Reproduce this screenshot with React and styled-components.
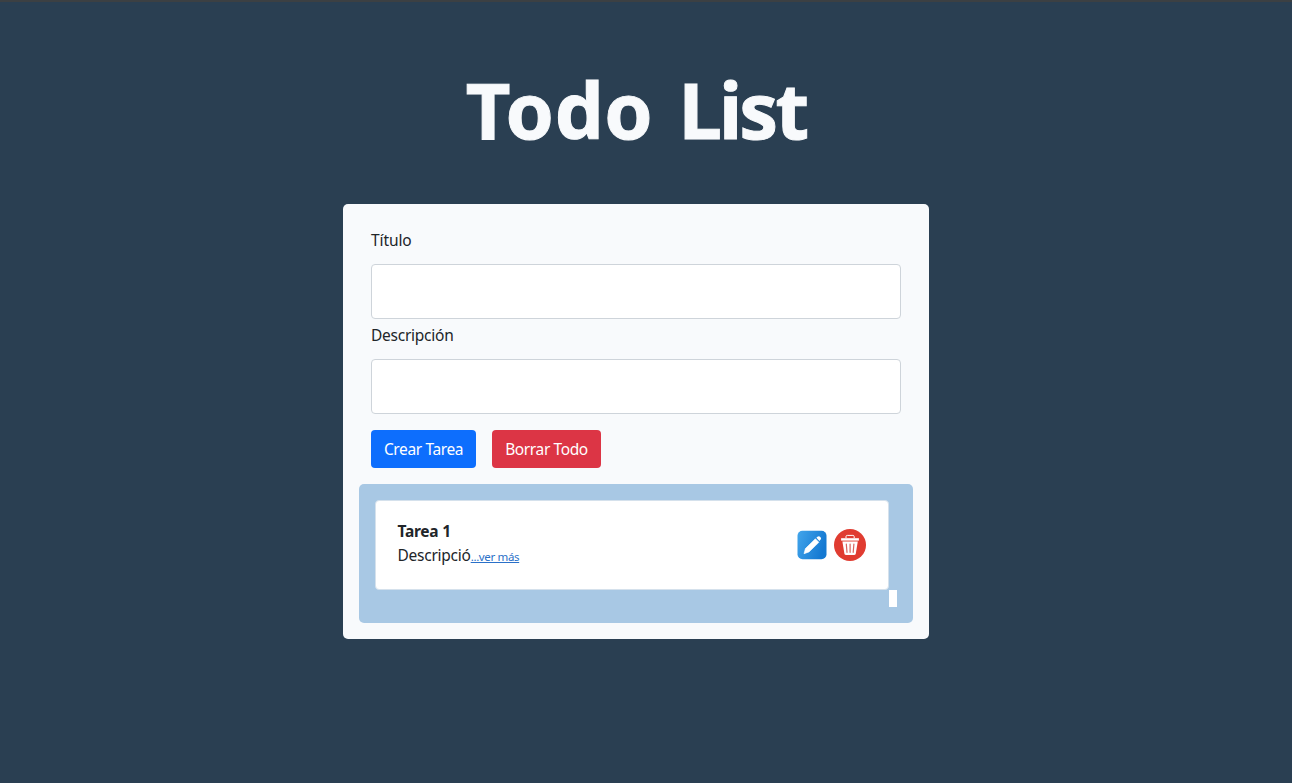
import React from "react";
import styled, { createGlobalStyle } from "styled-components";

const GlobalStyle = createGlobalStyle`
  *, *::before, *::after { box-sizing: border-box; }
  body {
    margin: 0;
    background: #2a3f52;
    color: #212529;
    font-family: "Segoe UI", "Noto Sans", "Open Sans", sans-serif;
    font-size: 15.5px;
    line-height: 24px;
  }
`;

const Page = styled.main`
  display: flex;
  flex-direction: column;
  align-items: center;
  min-height: 783px;
  padding-right: 20px;
  border-top: 2px solid #3c4043;
`;

const Title = styled.h1`
  margin: 59px 0 0;
  height: 143px;
  color: #f8fafc;
  font-size: 77.5px;
  font-weight: 700;
  line-height: 96px;
  word-spacing: 5px;
  white-space: nowrap;
  -webkit-text-stroke: 1px #f8fafc;
`;

const Word = styled.span`
  letter-spacing: ${(p) => p.$spacing};
`;

const Panel = styled.section`
  width: 586px;
  height: 435px;
  padding: 16px;
  border-radius: 5px;
  background: #f8fafc;
`;

const Form = styled.form`
  display: flex;
  flex-direction: column;
  padding: 8px 12px 16px;
`;

const Label = styled.label`
  height: 24px;
  margin-bottom: 12px;
  letter-spacing: ${(p) => p.$spacing || "0"};
`;

const Input = styled.input`
  width: 100%;
  height: 55px;
  margin-bottom: ${(p) => (p.$last ? "16px" : "4px")};
  padding: 6px 12px;
  border: 1px solid #ced4da;
  border-radius: 4px;
  background: #fff;
  font: inherit;
  outline: none;
`;

const Actions = styled.div`
  display: flex;
  gap: 16px;
`;

const Button = styled.button`
  width: ${(p) => p.$width};
  height: 38px;
  padding: 0;
  border: 0;
  border-radius: 4px;
  background: ${(p) => (p.$danger ? "#dc3545" : "#0d6efd")};
  color: #fff;
  font: inherit;
  letter-spacing: -0.38px;
  white-space: nowrap;
`;

const TaskList = styled.div`
  display: grid;
  grid-template-columns: 514px 8px;
  grid-template-rows: 90px 17px;
  height: 139px;
  padding: 16px;
  border-radius: 5px;
  background: #a8c8e4;
`;

const Task = styled.article`
  display: flex;
  align-items: center;
  justify-content: space-between;
  padding: 0 22px 0 21.5px;
  border: 1px solid #d5e1ec;
  border-radius: 4px;
  background: #fff;
`;

const ScrollCorner = styled.span`
  grid-column: 2;
  grid-row: 2;
  background: #fff;
`;

const TaskText = styled.div`
  display: flex;
  flex-direction: column;
  padding-bottom: 2px;
`;

const TaskName = styled.strong`
  font-weight: 700;
  letter-spacing: -0.25px;
`;

const Summary = styled.p`
  margin: 0;
  letter-spacing: -0.25px;
  white-space: nowrap;
`;

const More = styled.a`
  color: #2a70c8;
  font-size: 11.5px;
  letter-spacing: -0.35px;
  text-decoration: underline;
`;

const Icons = styled.div`
  display: flex;
  align-items: center;
  gap: 6px;
  svg { display: block; }
`;

const EditIcon = () => (
  <svg width="32" height="32" viewBox="0 0 32 32">
    <defs>
      <linearGradient id="edit-fill" x1="0" y1="0" x2="1" y2="0.35">
        <stop offset="0" stopColor="#42a5eb" />
        <stop offset="1" stopColor="#1479d2" />
      </linearGradient>
    </defs>
    <rect x="1.5" y="1.7" width="29" height="28.6" rx="5" fill="url(#edit-fill)" />
    <path d="M8 24.7 9.4 19.6 19.4 9.8 22.9 13.3 13 22.9Z" fill="#fff" stroke="#fff" strokeWidth=".6" strokeLinejoin="round" />
    <path d="m20.4 8.7 1-.9c1-.8 2-.7 2.9.1.9.9 1 2 .1 2.9l-1 1.1Z" fill="#fff" />
  </svg>
);

const DeleteIcon = () => (
  <svg width="32" height="32" viewBox="0 0 32 32">
    <circle cx="16" cy="16" r="16" fill="#e03c31" />
    <path d="M12 9V7.6c0-.8.5-1.2 1.3-1.2h5.6c.8 0 1.3.4 1.3 1.2V9" fill="none" stroke="#fff" strokeWidth="1" />
    <path d="M7.1 9.2h17.8v2.4H7.1Z" fill="#fff" />
    <path d="M8.4 12.4h15.4l-2 12.2c-.2 1-.6 1.4-1.5 1.4h-8.4c-.9 0-1.3-.4-1.5-1.4Z" fill="#fff" />
    <path d="m12.3 15 .7 8.3M16.1 15v8.3M19.9 15l-.7 8.3" fill="none" stroke="#d9645f" strokeWidth="1.2" strokeLinecap="round" />
  </svg>
);

export default function App() {
  return (
    <>
      <GlobalStyle />
      <Page>
        <Title>
          <Word $spacing="0.6px">Todo</Word>{" "}
          <Word $spacing="-2.8px">List</Word>
        </Title>
        <Panel>
          <Form>
            <Label htmlFor="title" $spacing="-0.1px">Título</Label>
            <Input id="title" />
            <Label htmlFor="description" $spacing="-0.25px">Descripción</Label>
            <Input id="description" $last />
            <Actions>
              <Button type="button" $width="105px">Crear Tarea</Button>
              <Button type="button" $width="109px" $danger>Borrar Todo</Button>
            </Actions>
          </Form>
          <TaskList>
            <Task>
              <TaskText>
                <TaskName>Tarea 1</TaskName>
                <Summary>Descripció<More>...ver más</More></Summary>
              </TaskText>
              <Icons>
                <EditIcon />
                <DeleteIcon />
              </Icons>
            </Task>
            <ScrollCorner />
          </TaskList>
        </Panel>
      </Page>
    </>
  );
}
